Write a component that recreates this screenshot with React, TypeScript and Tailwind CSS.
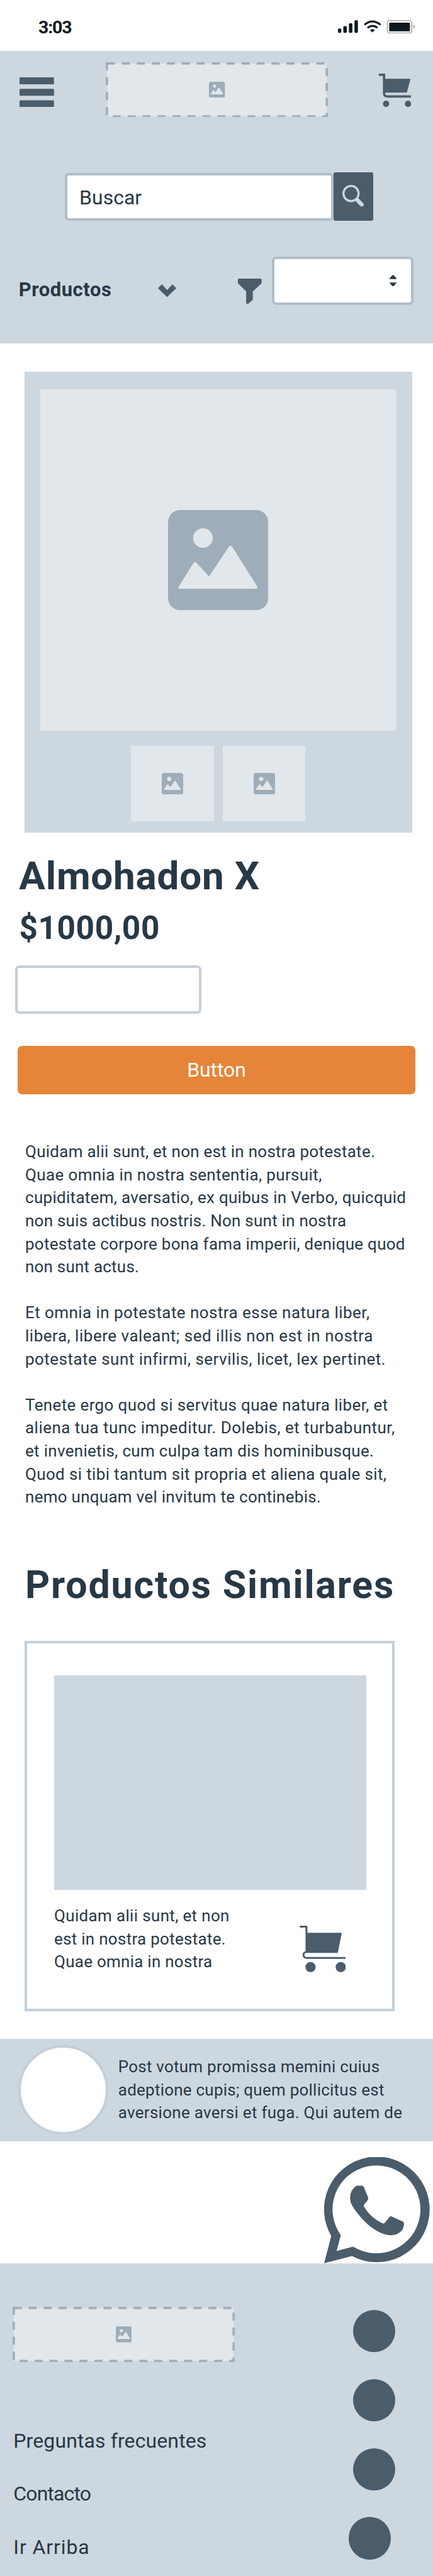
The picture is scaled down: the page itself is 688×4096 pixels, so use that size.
type Line = [text: string, tracking: string];

const description: Line[][] = [
  [
    ["Quidam alii sunt, et non est in nostra potestate.", "tracking-[0.26px]"],
    ["Quae omnia in nostra sententia, pursuit,", "tracking-[0.37px]"],
    ["cupiditatem, aversatio, ex quibus in Verbo, quicquid", "tracking-[0.29px]"],
    ["non suis actibus nostris. Non sunt in nostra", "tracking-[0.23px]"],
    ["potestate corpore bona fama imperii, denique quod", "tracking-[0.27px]"],
    ["non sunt actus.", "tracking-[0.21px]"],
  ],
  [
    ["Et omnia in potestate nostra esse natura liber,", "tracking-[0.44px]"],
    ["libera, libere valeant; sed illis non est in nostra", "tracking-[0.51px]"],
    ["potestate sunt infirmi, servilis, licet, lex pertinet.", "tracking-[0.47px]"],
  ],
  [
    ["Tenete ergo quod si servitus quae natura liber, et", "tracking-[0.37px]"],
    ["aliena tua tunc impeditur. Dolebis, et turbabuntur,", "tracking-[0.47px]"],
    ["et invenietis, cum culpa tam dis hominibusque.", "tracking-[0.3px]"],
    ["Quod si tibi tantum sit propria et aliena quale sit,", "tracking-[0.35px]"],
    ["nemo unquam vel invitum te continebis.", "tracking-[0.27px]"],
  ],
];

const similarText: Line[] = [
  ["Quidam alii sunt, et non", "tracking-[0.34px]"],
  ["est in nostra potestate.", "tracking-[0.28px]"],
  ["Quae omnia in nostra", "tracking-[0.26px]"],
];

const testimonial: Line[] = [
  ["Post votum promissa memini cuius", "tracking-[0.23px]"],
  ["adeptione cupis; quem pollicitus est", "tracking-[0.23px]"],
  ["aversione aversi et fuga. Qui autem de", "tracking-[0.28px]"],
];

function Lines({ lines }: { lines: Line[] }) {
  return (
    <p className="text-[26px] leading-[36.6px] whitespace-nowrap">
      {lines.map(([text, tracking]) => (
        <span key={text} className={`block ${tracking}`}>
          {text}
        </span>
      ))}
    </p>
  );
}

function ImageIcon({ className }: { className: string }) {
  return (
    <svg viewBox="0 0 100 100" className={className}>
      <rect width="100" height="100" rx="12" fill="#9eadb9" />
      <circle cx="34.8" cy="28" r="9.8" fill="#e1e7eb" />
      <path
        d="M10.8 76.3 L25.1 53.2 Q26.8 51 28.6 53 L40.9 66.3 L60.8 36.6 Q62.4 34.6 64 36.6 L89 76.3 Q90 78.6 87.5 78.7 H12 Q9.6 78.6 10.8 76.3Z"
        fill="#e1e7eb"
      />
    </svg>
  );
}

function LogoPlaceholder() {
  return (
    <div className="grid h-[87.8px] w-[353.2px] place-items-center">
      <svg viewBox="0 0 386 96" className="col-start-1 row-start-1 h-[87.8px] w-[353.2px]">
        <rect x="2" y="2" width="382" height="92" fill="#e1e7eb" stroke="#9eadb9" strokeWidth="4" strokeDasharray="14 12" />
      </svg>
      <ImageIcon className="col-start-1 row-start-1 h-[25.4px] w-[25.4px]" />
    </div>
  );
}

function StatusIcons() {
  return (
    <svg viewBox="141 104 402 70" className="mt-[31.7px] h-[21.4px] w-[122.6px]" fill="#0f1920">
      <rect x="141" y="147" width="17.5" height="23" rx="5.5" />
      <rect x="169" y="135" width="18" height="35" rx="5.5" />
      <rect x="198" y="120" width="18" height="50" rx="5.5" />
      <rect x="227" y="105" width="18" height="65" rx="5.5" />
      <path d="M279 128 Q320 94 363 128 M295 144 Q320 123.500 347 144" fill="none" stroke="#0f1920" strokeWidth="10" />
      <path d="M308 156 Q320 145 333 156 L320 168Z" />
      <rect x="398.500" y="106.500" width="127" height="65" rx="13" fill="none" stroke="#a09fa1" strokeWidth="5" />
      <rect x="408" y="117" width="108" height="45" rx="4" />
      <path d="M534 126 Q548 138 534 150Z" fill="#a09fa1" />
    </svg>
  );
}

function HeaderCart() {
  return (
    <svg viewBox="0 0 169 174" className="mt-[36.6px] ml-[80.3px] h-[53.1px] w-[51.5px]" fill="#4b5c6a">
      <path d="M0 6 H27 V102 Q27 119.500 44 119.500 H169" fill="none" stroke="#4b5c6a" strokeWidth="12" />
      <path d="M30 27 H161 Q165 27 164 31 L147 95 Q146 99 142 99 H30Z" />
      <circle cx="37.500" cy="157.500" r="16.500" />
      <circle cx="152" cy="157.500" r="16.500" />
    </svg>
  );
}

function CardCart() {
  return (
    <svg viewBox="0 0 241 242" className="mt-[33.5px] h-[73.8px] w-[73.5px]" fill="#4b5c6a">
      <path
        d="M5 5 H36 V137 A15.500 15.500 0 0 0 36 168 H236"
        fill="none"
        stroke="#4b5c6a"
        strokeWidth="10"
        strokeLinecap="round"
        strokeLinejoin="round"
      />
      <path d="M34 37 H215 Q220 37 219 42 L200 138 Q199 142 195 142 H34Z" />
      <circle cx="57" cy="215.500" r="26.500" />
      <circle cx="214.500" cy="215.500" r="26.500" />
    </svg>
  );
}

function WhatsAppIcon() {
  return (
    <svg viewBox="33 29 552 553" className="mt-[25.2px] ml-[515.2px] h-[168.8px] w-[168.4px]" fill="#4b5c6a">
      <path
        fillRule="evenodd"
        d="M33 582 L70 440 A275 275 0 1 1 178 544Z M98 518 L120 435 A229 229 0 1 1 184 495Z"
      />
      <path d="M200 179 Q206 176 215 178 L230 177 Q237 178 240 185 L262 238 Q264 244 262 249 Q255 262 242 275 Q237 280 241 288 Q275 345 335 373 Q343 376 348 372 Q360 359 371 343 Q376 335 384 338 L442 364 Q449 367 449 374 Q449 398 436 413 Q413 436 380 436 Q325 433 262 381 Q205 328 178 280 Q168 262 168 240 Q170 200 200 179Z" />
    </svg>
  );
}

export default function App() {
  return (
    <div className="flex h-[4096px] w-[688px] flex-col overflow-hidden bg-white font-['Roboto',sans-serif] text-[#283845]">
      <div className="flex h-[80.5px] shrink-0 justify-between pr-[28.3px] pl-[61px]">
        <span className="mt-[23.5px] h-[40px] text-[28.5px] leading-[40px] font-bold tracking-[-1.2px] text-[#0f1920]">3:03</span>
        <StatusIcons />
      </div>

      <header className="h-[465px] shrink-0 bg-[#cdd7e0]">
        <div className="flex h-[106.1px] items-start">
          <div className="mt-[42px] ml-[31.2px] flex w-[54.8px] flex-col gap-[4.6px]">
            <svg viewBox="0 0 54.8 47.600" className="h-[47.6px] w-[54.8px]" fill="#4b5c6a">
              <rect width="54.8" height="11" rx="1.500" />
              <rect y="18.300" width="54.8" height="11" rx="1.500" />
              <rect y="36.600" width="54.8" height="11" rx="1.500" />
            </svg>
          </div>
          <div className="mt-[18.2px] ml-[82.5px]">
            <LogoPlaceholder />
          </div>
          <HeaderCart />
        </div>

        <div className="mt-[87.2px] ml-[102.7px] flex h-[77.7px] items-start">
          <div className="mt-[1px] flex h-[76.4px] w-[426.9px] items-center rounded-[6px] border-[4px] border-[#b0bdc9] bg-white pt-[2px] pl-[19.4px] text-[32px] leading-none">
            Buscar
          </div>
          <div className="h-[77.7px] w-[63.7px] rounded-[3px] bg-[#4b5c6a] pt-[20.2px] pl-[14.8px]">
            <svg viewBox="346 124 114 115" className="h-[35px] w-[34.8px]" fill="none" stroke="#cdd7e0">
              <circle cx="391" cy="169" r="39.500" strokeWidth="11" />
              <path d="M426 205 L447 226.500" strokeWidth="21" strokeLinecap="round" />
              <path d="M419 197 L430 208" strokeWidth="19" />
            </svg>
          </div>
        </div>

        <div className="mt-[56.7px] flex h-[76.7px] items-start">
          <span className="mt-[32.4px] ml-[29.7px] w-[221.7px] text-[31px] leading-[40px] font-bold tracking-[0.55px]">Productos</span>
          <svg viewBox="0 0 29 20.400" className="mt-[43.4px] h-[20.4px] w-[29px]" fill="#4b5c6a">
            <path d="M6.200 0 L0 6.200 L14.500 20.400 L29 6.200 L23 0 L14.500 9.300Z" />
          </svg>
          <svg viewBox="0 0 37.700 40.500" className="mt-[34.7px] ml-[97.9px] h-[40.5px] w-[37.7px]" fill="#4b5c6a">
            <path d="M1.500 0 H36.200 Q37.700 0 37.700 1.500 V6 Q37.700 7.200 37 8 L23.700 20.600 V33.500 L16.800 39.800 Q13.200 41.500 13.200 38.500 V20.600 L.7 8 Q0 7.200 0 6 V1.500 Q0 0 1.500 0Z" />
          </svg>
          <div className="ml-[16.2px] h-[76.7px] w-[224.7px] rounded-[7px] border-[4px] border-[#b0bdc9] bg-white pt-[24.4px] pl-[183px]">
            <svg viewBox="0 0 36 61" className="h-[18.6px] w-[11px]" fill="#283845">
              <path d="M0 22 V18 L15 2 Q18 -1 21 2 L36 18 V22Z M0 40 V43 L15 59 Q18 62 21 59 L36 43 V40Z" />
            </svg>
          </div>
        </div>
      </header>

      <section className="mt-[45.6px] ml-[38.6px] h-[732.6px] w-[616.5px] shrink-0 bg-[#cdd7e0] pt-[27.6px]">
        <div className="ml-[25.4px] grid h-[543.4px] w-[565.7px] place-items-center bg-[#e1e7eb]">
          <ImageIcon className="h-[159.2px] w-[159.2px]" />
        </div>
        <div className="mt-[23.6px] ml-[169.8px] flex gap-[14.5px]">
          <div className="grid h-[119.9px] w-[131.2px] place-items-center bg-[#e1e7eb]">
            <ImageIcon className="h-[34.2px] w-[34.2px]" />
          </div>
          <div className="grid h-[119.9px] w-[131.2px] place-items-center bg-[#e1e7eb]">
            <ImageIcon className="h-[34.2px] w-[34.2px]" />
          </div>
        </div>
      </section>

      <h1 className="mt-[38.6px] ml-[30.3px] shrink-0 text-[62px] leading-[62px] font-bold tracking-[0.76px]">Almohadon X</h1>
      <p className="mt-[26.1px] ml-[30.5px] shrink-0 text-[51.5px] leading-[52px] font-bold tracking-[0.49px]">$1000,00</p>
      <div className="mt-[32.8px] ml-[23.7px] h-[76.9px] w-[296.6px] shrink-0 rounded-[7px] border-[4px] border-[#c5cfd9] bg-white" />
      <button className="mt-[51.2px] ml-[27.6px] h-[76.9px] w-[632.8px] shrink-0 rounded-[7px] bg-[#e68539] pb-[2px] text-[32px] leading-none tracking-[-0.1px] text-white">
        Button
      </button>

      <div className="mt-[73.1px] ml-[40px] flex shrink-0 flex-col gap-[36.6px]">
        {description.map((lines) => (
          <Lines key={lines[0][0]} lines={lines} />
        ))}
      </div>

      <h2 className="mt-[91.4px] ml-[40px] shrink-0 text-[61px] leading-[61px] font-bold tracking-[1.75px] whitespace-nowrap">
        Productos Similares
      </h2>

      <article className="mt-[58px] ml-[38.6px] h-[589.2px] w-[588.9px] shrink-0 border-[4px] border-[#c3cfd9] bg-white pt-[50.7px] pl-[43.4px]">
        <div className="h-[340.8px] w-[495.8px] bg-[#cdd7e0]" />
        <div className="mt-[23.7px] flex items-start">
          <div className="w-[389.7px]">
            <Lines lines={similarText} />
          </div>
          <CardCart />
        </div>
      </article>

      <section className="mt-[43.8px] flex h-[163.2px] shrink-0 items-start bg-[#cdd7e0]">
        <div className="mt-[9.5px] ml-[29.4px] h-[142.4px] w-[142.4px] rounded-full border-[4px] border-[#c3cfd9] bg-white" />
        <div className="mt-[25.9px] ml-[16px]">
          <Lines lines={testimonial} />
        </div>
      </section>

      <div className="h-[194px] shrink-0">
        <WhatsAppIcon />
      </div>

      <footer className="flex flex-1 items-start bg-[#cdd7e0]">
        <div className="ml-[20.2px] w-[540.6px] pt-[68.7px]">
          <LogoPlaceholder />
          <nav className="mt-[105.6px] flex flex-col gap-[44.1px] pl-[1.1px] text-[32px] leading-[40px]">
            <a className="tracking-[0.11px]">Preguntas frecuentes</a>
            <a className="tracking-[-0.86px]">Contacto</a>
            <a className="tracking-[0.9px]">Ir Arriba</a>
          </nav>
        </div>
        <div className="mt-[73.8px] flex flex-col gap-[42.4px]">
          <div className="size-[67.4px] rounded-full bg-[#4b5c6a]" />
          <div className="size-[67.4px] rounded-full bg-[#4b5c6a]" />
          <div className="size-[67.4px] rounded-full bg-[#4b5c6a]" />
          <div className="-ml-[7px] size-[67.4px] rounded-full bg-[#4b5c6a]" />
        </div>
      </footer>
    </div>
  );
}
